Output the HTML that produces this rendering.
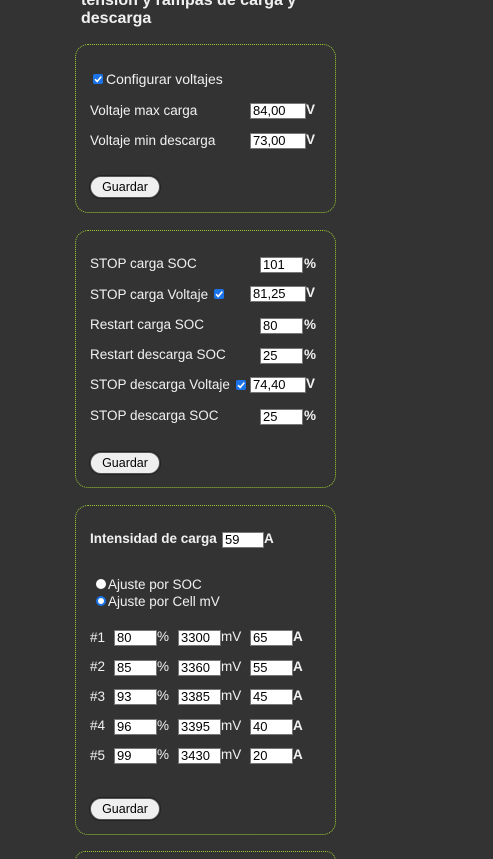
<!DOCTYPE html>
<html><head><meta charset="utf-8"><style>
*{margin:0;padding:0;box-sizing:border-box}
html{width:493px;height:859px;overflow:hidden;background:#333}
body{width:493px;height:859px;background:#333;overflow:hidden;position:relative;font-family:"Liberation Sans",Arial,sans-serif;color:#f0f0f0;font-size:13.5px}
.a{position:absolute;white-space:nowrap;line-height:15px}
.box{position:absolute;left:75px;width:261px;border:1px dotted #9acd32;border-radius:13px}
.in{position:absolute;height:16px;background:#fff;border:1px solid #767676;color:#000;font:13px "Liberation Sans",Arial,sans-serif;padding:0 2px;line-height:14px;overflow:hidden}
.btn{position:absolute;left:90px;width:70px;height:22px;background:#efefef;border:1px solid #555;border-radius:11px;color:#000;font:12.5px "Liberation Sans",Arial,sans-serif;text-align:center;line-height:20px;box-shadow:0 0 0 1px #222}
.cb{position:absolute;width:10px;height:10px;background:#1a73e8;border-radius:2px}
.cb svg{position:absolute;left:0;top:0}
.b{font-weight:bold}
.rd{position:absolute;width:10px;height:10px;border-radius:50%;background:#fff}
.rs{position:absolute;width:10px;height:10px;border-radius:50%;background:#fff;border:2px solid #1a73e8}
</style></head><body>
<div class="a b" style="left:81px;top:-8px;font-size:16px;line-height:18px">tension y rampas de carga y</div>
<div class="a b" style="left:81px;top:10px;font-size:16px;line-height:18px">descarga</div>

<div class="box" style="top:44px;height:169px"></div>
<div class="cb" style="left:93px;top:74px"><svg width="10" height="10"><path d="M2 5.2L4.2 7.4L8.3 2.6" stroke="#fff" stroke-width="1.6" fill="none"/></svg></div>
<div class="a" style="left:106px;top:72px;font-size:14px">Configurar voltajes</div>
<div class="a" style="left:90px;top:103px">Voltaje max carga</div>
<div class="in" style="left:250px;top:103px;width:56px">84,00</div><div class="a b" style="left:306px;top:102px">V</div>
<div class="a" style="left:90px;top:133px">Voltaje min descarga</div>
<div class="in" style="left:250px;top:133px;width:56px">73,00</div><div class="a b" style="left:306px;top:132px">V</div>
<div class="btn" style="top:176px">Guardar</div>

<div class="box" style="top:230px;height:258px"></div>
<div class="a" style="left:90px;top:256px">STOP carga SOC</div>
<div class="in" style="left:260px;top:257px;width:43px">101</div><div class="a b" style="left:304px;top:256px">%</div>
<div class="a" style="left:90px;top:287px">STOP carga Voltaje</div>
<div class="cb" style="left:214px;top:289px"><svg width="10" height="10"><path d="M2 5.2L4.2 7.4L8.3 2.6" stroke="#fff" stroke-width="1.6" fill="none"/></svg></div>
<div class="in" style="left:250px;top:286px;width:56px">81,25</div><div class="a b" style="left:306px;top:285px">V</div>
<div class="a" style="left:90px;top:317px">Restart carga SOC</div>
<div class="in" style="left:260px;top:318px;width:43px">80</div><div class="a b" style="left:304px;top:317px">%</div>
<div class="a" style="left:90px;top:347px">Restart descarga SOC</div>
<div class="in" style="left:260px;top:348px;width:43px">25</div><div class="a b" style="left:304px;top:347px">%</div>
<div class="a" style="left:90px;top:377px">STOP descarga Voltaje</div>
<div class="cb" style="left:236px;top:380px"><svg width="10" height="10"><path d="M2 5.2L4.2 7.4L8.3 2.6" stroke="#fff" stroke-width="1.6" fill="none"/></svg></div>
<div class="in" style="left:250px;top:377px;width:56px">74,40</div><div class="a b" style="left:306px;top:376px">V</div>
<div class="a" style="left:90px;top:408px">STOP descarga SOC</div>
<div class="in" style="left:260px;top:409px;width:43px">25</div><div class="a b" style="left:304px;top:408px">%</div>
<div class="btn" style="top:452px">Guardar</div>

<div class="box" style="top:505px;height:330px"></div>
<div class="a b" style="left:90px;top:531px">Intensidad de carga</div>
<div class="in" style="left:222px;top:532px;width:42px">59</div><div class="a b" style="left:264px;top:531px">A</div>
<div class="rd" style="left:96px;top:579px"></div><div class="a" style="left:108px;top:577px">Ajuste por SOC</div>
<div class="rs" style="left:96px;top:596px"></div><div class="a" style="left:108px;top:594px">Ajuste por Cell mV</div>

<div class="a" style="left:90px;top:630px">#1</div><div class="in" style="left:114px;top:630px;width:43px">80</div><div class="a" style="left:157px;top:629px">%</div><div class="in" style="left:178px;top:630px;width:43px">3300</div><div class="a" style="left:221px;top:629px">mV</div><div class="in" style="left:250px;top:630px;width:43px">65</div><div class="a b" style="left:293px;top:629px">A</div>
<div class="a" style="left:90px;top:659px">#2</div><div class="in" style="left:114px;top:660px;width:43px">85</div><div class="a" style="left:157px;top:659px">%</div><div class="in" style="left:178px;top:660px;width:43px">3360</div><div class="a" style="left:221px;top:659px">mV</div><div class="in" style="left:250px;top:660px;width:43px">55</div><div class="a b" style="left:293px;top:659px">A</div>
<div class="a" style="left:90px;top:689px">#3</div><div class="in" style="left:114px;top:689px;width:43px">93</div><div class="a" style="left:157px;top:688px">%</div><div class="in" style="left:178px;top:689px;width:43px">3385</div><div class="a" style="left:221px;top:688px">mV</div><div class="in" style="left:250px;top:689px;width:43px">45</div><div class="a b" style="left:293px;top:688px">A</div>
<div class="a" style="left:90px;top:718px">#4</div><div class="in" style="left:114px;top:719px;width:43px">96</div><div class="a" style="left:157px;top:718px">%</div><div class="in" style="left:178px;top:719px;width:43px">3395</div><div class="a" style="left:221px;top:718px">mV</div><div class="in" style="left:250px;top:719px;width:43px">40</div><div class="a b" style="left:293px;top:718px">A</div>
<div class="a" style="left:90px;top:748px">#5</div><div class="in" style="left:114px;top:748px;width:43px">99</div><div class="a" style="left:157px;top:747px">%</div><div class="in" style="left:178px;top:748px;width:43px">3430</div><div class="a" style="left:221px;top:747px">mV</div><div class="in" style="left:250px;top:748px;width:43px">20</div><div class="a b" style="left:293px;top:747px">A</div>
<div class="btn" style="top:798px">Guardar</div>

<div class="box" style="top:851px;height:20px"></div>
</body></html>
